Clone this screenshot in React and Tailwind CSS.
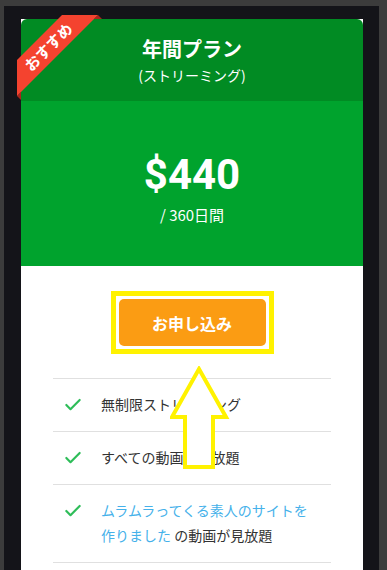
import { Check } from 'lucide-react'

const features = [
  { text: '無制限ストリーミング' },
  { text: 'すべての動画が見放題' },
  { link: 'ムラムラってくる素人のサイトを作りました', text: ' の動画が見放題' },
]

function Ribbon() {
  return (
    <div className="absolute -left-1 -top-1 z-10 h-[90px] w-[90px]">
      <svg className="absolute left-0 top-0" width="90" height="90" viewBox="0 0 90 90">
        <polygon points="81,0 85,4 77,4" fill="#a9261b" />
        <polygon points="0,81 4,85 4,77" fill="#a9261b" />
        <polygon points="45,0 81,0 0,81 0,45" fill="#f4432f" />
      </svg>
      <div className="absolute left-[-39px] top-[19px] flex h-[25px] w-[140px] -rotate-45 items-center justify-center text-[15px] font-bold leading-none text-white">
        おすすめ
      </div>
    </div>
  )
}

function Arrow() {
  return (
    <svg className="pointer-events-none absolute left-[149px] top-[347px] z-20" width="60" height="104" viewBox="0 0 60 104">
      <polygon
        points="29,3 56,51 43,51 43,101 15,101 15,51 2,51"
        fill="white"
        stroke="#fff200"
        strokeWidth="4"
        strokeLinejoin="miter"
      />
    </svg>
  )
}

export default function App() {
  return (
    <div className="min-h-screen bg-[#3c3c3c] pl-[4px] pr-[8px] pt-[6px] font-['Noto_Sans_CJK_JP',sans-serif]">
      <div className="min-h-[564px] bg-[#141419] pl-[17px] pr-[16px] pt-[13px] pb-10">
        <div className="relative bg-white">
          <Ribbon />

          <div className="rounded-t-[6px] bg-[#018b23] pb-[14px] pt-[16px] text-center text-white">
            <h2 className="text-[20px] font-bold leading-[28px]">年間プラン</h2>
            <p className="text-[14px] leading-[24px]">(ストリーミング)</p>
          </div>

          <div className="bg-[#00a32d] pb-[41px] pt-[50px] text-center text-white">
            <div className="font-['Roboto',sans-serif] text-[42px] font-bold leading-[48px]">$440</div>
            <div className="mt-[6px] text-[15px] leading-[20px]">/ 360日間</div>
          </div>

          <div className="px-[32px] pb-10 pt-[25px]">
            <div className="flex justify-center">
              <div className="border-[5px] border-[#fff200] bg-white p-[3px]">
                <button
                  type="button"
                  className="block h-[47px] w-[147px] rounded-[5px] bg-[#fb9c13] text-[16px] font-bold text-white"
                >
                  お申し込み
                </button>
              </div>
            </div>

            <ul className="mt-[24px] border-t border-[#e0e0e0] text-[14px] leading-[25px] text-[#333]">
              {features.map((f, i) => (
                <li key={i} className="flex items-start border-b border-[#e0e0e0] pb-[14px] pt-[13px] pr-[18px]">
                  <span className="flex h-[25px] w-[48px] shrink-0 items-center pl-[10px]">
                    <Check size={20} strokeWidth={2.6} color="#2ebd59" />
                  </span>
                  <span>
                    {f.link && <a href="#" className="text-[#45b1ea]">{f.link}</a>}
                    {f.text}
                  </span>
                </li>
              ))}
            </ul>
          </div>

          <Arrow />
        </div>
      </div>
    </div>
  )
}
